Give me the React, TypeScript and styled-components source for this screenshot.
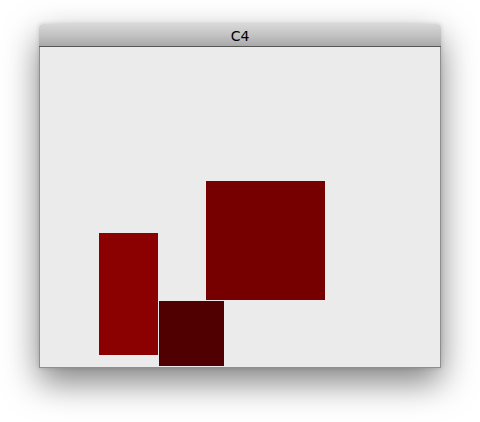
import styled, { createGlobalStyle } from 'styled-components';

const GlobalStyle = createGlobalStyle`
  html, body {
    margin: 0;
    padding: 0;
    background: #ffffff;
  }
  body {
    font-family: "DejaVu Sans", "Liberation Sans", sans-serif;
  }
`;

const Page = styled.div`
  width: 480px;
  height: 422px;
  padding: 24px 0 0 39px;
  box-sizing: border-box;
`;

const Window = styled.div`
  width: 402px;
  display: flex;
  flex-direction: column;
  border-radius: 4px 4px 0 0;
  box-shadow: 0 14px 34px rgba(0, 0, 0, 0.5), 0 0 4px rgba(0, 0, 0, 0.15);
`;

const TitleBar = styled.div`
  height: 23px;
  display: flex;
  align-items: center;
  justify-content: center;
  border-radius: 4px 4px 0 0;
  background: linear-gradient(#d8d8d8, #c3c3c3 50%, #a9a9a9);
  border-bottom: 1px solid #555555;
  font-size: 14px;
  color: #000000;
  padding-top: 1px;
  box-sizing: border-box;
`;

const Canvas = styled.div`
  position: relative;
  height: 320px;
  background: #ebebeb;
  border: 1px solid #8e8e8e;
  border-top: none;
  overflow: hidden;
`;

const Block = styled.div<{ $fill: string }>`
  position: absolute;
  background: ${({ $fill }) => $fill};
`;

const blocks = [
  { x: 59, y: 186, w: 59, h: 122, fill: '#8b0000' },
  { x: 119, y: 254, w: 65, h: 65, fill: '#500000' },
  { x: 166, y: 134, w: 119, h: 119, fill: '#760000' },
];

export default function App() {
  return (
    <Page>
      <GlobalStyle />
      <Window>
        <TitleBar>C4</TitleBar>
        <Canvas>
          {blocks.map((b, i) => (
            <Block
              key={i}
              $fill={b.fill}
              style={{ left: b.x, top: b.y, width: b.w, height: b.h }}
            />
          ))}
        </Canvas>
      </Window>
    </Page>
  );
}
